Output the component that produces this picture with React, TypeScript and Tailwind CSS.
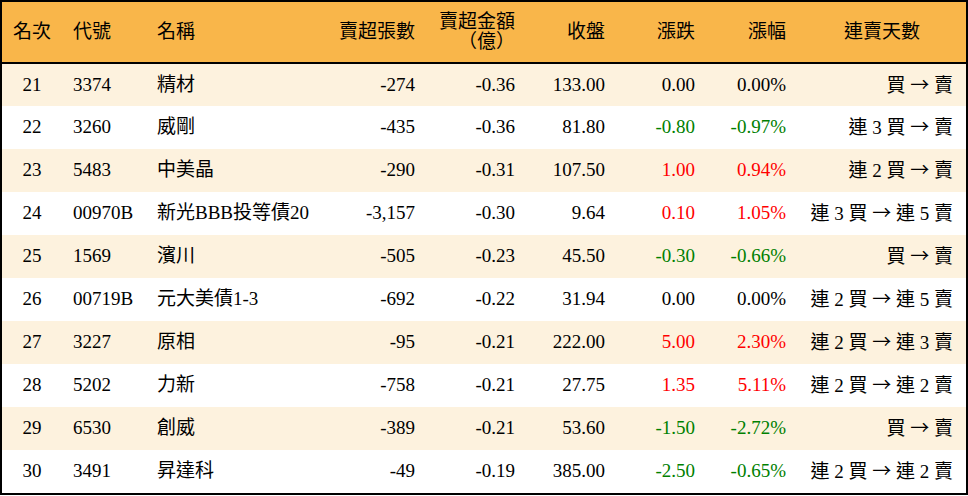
const rows = [
  { rank: 21, code: "3374", name: "精材", vol: "-274", amt: "-0.36", close: "133.00", chg: "0.00", pct: "0.00%", buy: "買", sell: "賣" },
  { rank: 22, code: "3260", name: "威剛", vol: "-435", amt: "-0.36", close: "81.80", chg: "-0.80", pct: "-0.97%", buy: "連 3 買", sell: "賣" },
  { rank: 23, code: "5483", name: "中美晶", vol: "-290", amt: "-0.31", close: "107.50", chg: "1.00", pct: "0.94%", buy: "連 2 買", sell: "賣" },
  { rank: 24, code: "00970B", name: "新光BBB投等債20", vol: "-3,157", amt: "-0.30", close: "9.64", chg: "0.10", pct: "1.05%", buy: "連 3 買", sell: "連 5 賣" },
  { rank: 25, code: "1569", name: "濱川", vol: "-505", amt: "-0.23", close: "45.50", chg: "-0.30", pct: "-0.66%", buy: "買", sell: "賣" },
  { rank: 26, code: "00719B", name: "元大美債1-3", vol: "-692", amt: "-0.22", close: "31.94", chg: "0.00", pct: "0.00%", buy: "連 2 買", sell: "連 5 賣" },
  { rank: 27, code: "3227", name: "原相", vol: "-95", amt: "-0.21", close: "222.00", chg: "5.00", pct: "2.30%", buy: "連 2 買", sell: "連 3 賣" },
  { rank: 28, code: "5202", name: "力新", vol: "-758", amt: "-0.21", close: "27.75", chg: "1.35", pct: "5.11%", buy: "連 2 買", sell: "連 2 賣" },
  { rank: 29, code: "6530", name: "創威", vol: "-389", amt: "-0.21", close: "53.60", chg: "-1.50", pct: "-2.72%", buy: "買", sell: "賣" },
  { rank: 30, code: "3491", name: "昇達科", vol: "-49", amt: "-0.19", close: "385.00", chg: "-2.50", pct: "-0.65%", buy: "連 2 買", sell: "連 2 賣" },
];

const tone = (v: string) => {
  const n = parseFloat(v);
  if (n > 0) return "text-[#ff0000]";
  if (n < 0) return "text-[#008000]";
  return "text-black";
};

export default function App() {
  return (
    <div
      className="w-[968px] h-[496px] bg-white text-black text-[19px]"
      style={{ fontFamily: '"Liberation Serif", "Noto Sans CJK TC", serif' }}
    >
      <div className="border-2 border-black">
        <table className="w-[964px] table-fixed border-collapse">
          <colgroup>
            <col className="w-[60px]" />
            <col className="w-[83px]" />
            <col className="w-[185px]" />
            <col className="w-[97px]" />
            <col className="w-[100px]" />
            <col className="w-[90px]" />
            <col className="w-[90px]" />
            <col className="w-[91px]" />
            <col className="w-[168px]" />
          </colgroup>
          <thead>
            <tr className="h-[61px] bg-[#f9b64a] border-b-2 border-black">
              <th className="font-normal text-center">名次</th>
              <th className="font-normal text-left pl-[11px]">代號</th>
              <th className="font-normal text-left pl-3">名稱</th>
              <th className="font-normal text-right pr-3">賣超張數</th>
              <th className="font-normal text-right pr-3 leading-[20px]">
                賣超金額
                <br />
                （億）
              </th>
              <th className="font-normal text-right pr-3">收盤</th>
              <th className="font-normal text-right pr-3">漲跌</th>
              <th className="font-normal text-right pr-3">漲幅</th>
              <th className="font-normal text-center">連賣天數</th>
            </tr>
          </thead>
          <tbody>
            {rows.map((r, i) => (
              <tr key={r.rank} className={`h-[43px] ${i % 2 === 0 ? "bg-[#fdf2de]" : "bg-white"}`}>
                <td className="text-center">{r.rank}</td>
                <td className="text-left pl-[11px]">{r.code}</td>
                <td className="text-left pl-3 whitespace-nowrap">{r.name}</td>
                <td className="text-right pr-3">{r.vol}</td>
                <td className="text-right pr-3">{r.amt}</td>
                <td className="text-right pr-3">{r.close}</td>
                <td className={`text-right pr-3 ${tone(r.chg)}`}>{r.chg}</td>
                <td className={`text-right pr-3 ${tone(r.pct)}`}>{r.pct}</td>
                <td className="text-right pr-[13px] whitespace-nowrap">
                  {r.buy}{" "}
                  <span style={{ fontFamily: '"Noto Sans CJK TC", sans-serif' }}>→</span>
                  {" "}{r.sell}
                </td>
              </tr>
            ))}
          </tbody>
        </table>
      </div>
    </div>
  );
}
